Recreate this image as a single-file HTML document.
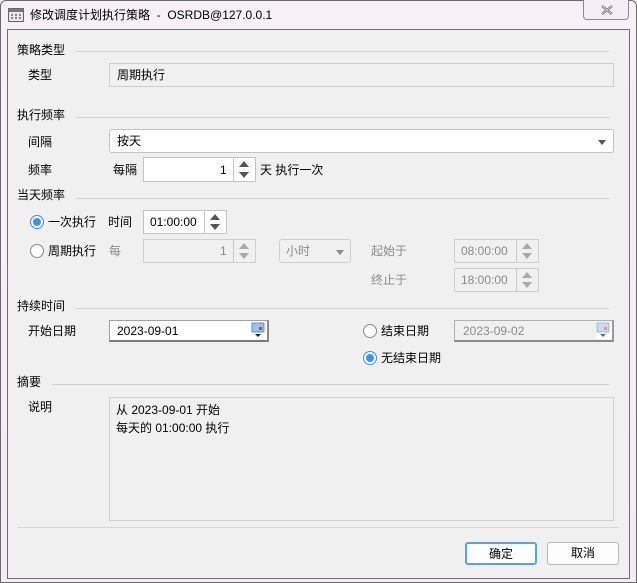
<!DOCTYPE html>
<html><head><meta charset="utf-8"><style>
*{box-sizing:border-box;margin:0;padding:0}
body{width:637px;height:583px;position:relative;overflow:hidden;background:#f5eef5;font-family:"Liberation Sans","Noto Sans CJK SC",sans-serif;font-size:12px;color:#000}
.a{position:absolute;white-space:nowrap;line-height:14px}
.frame{position:absolute;left:0;top:0;width:637px;height:583px;border:1px solid #6a6a6a;border-radius:6px 6px 0 0;background:linear-gradient(#f7f1f7,#f4ecf4)}
.inner{position:absolute;left:7px;top:29px;width:623px;height:550px;background:#f0f0f0;border:1px solid #6e6e6e}
.ln{position:absolute;height:1px;background:#d3d3d3}
.box{position:absolute;border:1px solid #c3c3c3;background:#fff}
.dis{background:#f0f0f0;border-color:#cfcfcf;color:#8a8a8a}
.g{color:#8a8a8a}
.spb{position:absolute;top:0;bottom:0;right:0;width:22px;border-left:1px solid #c8c8c8}
.spb:before{content:"";position:absolute;left:5px;top:3px;border:5px solid transparent;border-bottom:6px solid #555;border-top:0}
.spb:after{content:"";position:absolute;left:5px;bottom:3px;border:5px solid transparent;border-top:6px solid #555;border-bottom:0}
.spb.d:before{border-bottom-color:#aaa}.spb.d:after{border-top-color:#aaa}
.rad{position:absolute;width:14px;height:14px;border-radius:50%;border:1px solid #8a8a8a;background:#fff}
.rad.on{border-color:#3c8ee0}
.rad.on:after{content:"";position:absolute;left:2px;top:2px;width:8px;height:8px;border-radius:50%;background:#3c94e8}
.tri{position:absolute;border:4px solid transparent;border-top:5px solid #555;border-bottom:0}
.btn{position:absolute;border:1px solid #b9b9b9;border-radius:3px;background:#fdfdfd;text-align:center;line-height:20px}
</style></head><body>
<div class="frame"></div>
<svg class="a" style="left:8px;top:8px" width="16" height="14"><rect x="0.5" y="0.5" width="15" height="13" fill="#e8e8e8" stroke="#666"/><rect x="1" y="1" width="14" height="3" fill="#777"/><g fill="#888"><rect x="3" y="6" width="2" height="2"/><rect x="7" y="6" width="2" height="2"/><rect x="11" y="6" width="2" height="2"/><rect x="3" y="9" width="2" height="2"/><rect x="7" y="9" width="2" height="2"/><rect x="11" y="9" width="2" height="2"/></g></svg>
<div class="a" style="left:30px;top:8px;font-size:12px">修改调度计划执行策略 &nbsp;- &nbsp;OSRDB@127.0.0.1</div>
<div class="a" style="left:583px;top:0;width:46px;height:20px;border:1px solid #8a8a8a;border-top:0;border-radius:0 0 4px 4px;background:#f6eef6"><svg style="position:absolute;left:17px;top:5px" width="12" height="10"><path d="M1 1L11 9M11 1L1 9" stroke="#666" stroke-width="2.4"/><path d="M1 1L11 9M11 1L1 9" stroke="#f6f6f6" stroke-width="0.8"/></svg></div>
<div class="inner"></div>

<div class="a" style="left:17px;top:43px">策略类型</div><div class="ln" style="left:76px;top:51px;width:533px"></div>
<div class="a" style="left:28px;top:68px">类型</div>
<div class="box dis" style="left:109px;top:63px;width:505px;height:24px;color:#000"><div class="a" style="left:7px;top:4px">周期执行</div></div>

<div class="a" style="left:17px;top:108px">执行频率</div><div class="ln" style="left:76px;top:117px;width:533px"></div>
<div class="a" style="left:28px;top:135px">间隔</div>
<div class="box" style="left:109px;top:129px;width:505px;height:24px;border-radius:3px"><div class="a" style="left:7px;top:4px">按天</div><div class="tri" style="left:488px;top:10px"></div></div>
<div class="a" style="left:28px;top:163px">频率</div><div class="a" style="left:113px;top:163px">每隔</div>
<div class="box" style="left:143px;top:157px;width:113px;height:25px"><div class="a" style="left:76px;top:5px">1</div><div class="spb"></div></div>
<div class="a" style="left:260px;top:163px">天 执行一次</div>

<div class="a" style="left:17px;top:188px">当天频率</div><div class="ln" style="left:76px;top:198px;width:533px"></div>
<div class="rad on" style="left:30px;top:215px"></div><div class="a" style="left:48px;top:215px">一次执行</div>
<div class="a" style="left:108px;top:215px">时间</div>
<div class="box" style="left:143px;top:210px;width:84px;height:24px"><div class="a" style="left:6px;top:4px">01:00:00</div><div class="spb"></div></div>
<div class="rad" style="left:30px;top:244px"></div><div class="a" style="left:48px;top:244px">周期执行</div>
<div class="a g" style="left:109px;top:244px">每</div>
<div class="box dis" style="left:143px;top:239px;width:113px;height:24px"><div class="a" style="left:76px;top:4px">1</div><div class="spb d"></div></div>
<div class="box dis" style="left:279px;top:239px;width:72px;height:24px;border-radius:3px"><div class="a" style="left:6px;top:4px">小时</div><div class="tri" style="left:56px;top:10px;border-top-color:#888"></div></div>
<div class="a g" style="left:371px;top:244px">起始于</div>
<div class="box dis" style="left:454px;top:239px;width:85px;height:24px"><div class="a" style="left:6px;top:4px">08:00:00</div><div class="spb d"></div></div>
<div class="a g" style="left:371px;top:273px">终止于</div>
<div class="box dis" style="left:454px;top:268px;width:85px;height:24px"><div class="a" style="left:6px;top:4px">18:00:00</div><div class="spb d"></div></div>

<div class="a" style="left:17px;top:299px">持续时间</div><div class="ln" style="left:76px;top:308px;width:533px"></div>
<div class="a" style="left:28px;top:324px">开始日期</div>
<div class="box" style="left:109px;top:320px;width:160px;height:22px;border-color:#a0a0a0;border-bottom:2px solid #7a7a7a;border-right:2px solid #8a8a8a"><div class="a" style="left:7px;top:3px">2023-09-01</div>
<svg style="position:absolute;left:141px;top:1px" width="16" height="17"><rect x="1" y="1" width="12" height="9" fill="#9ec0ec" stroke="#4a7ac0" stroke-width="0.8"/><rect x="8" y="5" width="3" height="3" fill="#e33"/><path d="M4 12h6l-3 3z" fill="#222"/></svg></div>
<div class="rad" style="left:363px;top:324px"></div><div class="a" style="left:381px;top:324px">结束日期</div>
<div class="box dis" style="left:454px;top:320px;width:160px;height:22px;border-color:#b0b0b0;border-bottom:2px solid #8a8a8a;border-right:2px solid #999"><div class="a" style="left:8px;top:3px">2023-09-02</div>
<svg style="position:absolute;left:141px;top:1px" width="16" height="17"><rect x="0" y="0" width="17" height="19" fill="#fff"/><rect x="1" y="1" width="12" height="9" fill="#c8dcf4" stroke="#8aaad8" stroke-width="0.8"/><rect x="8" y="5" width="3" height="3" fill="#f88"/><path d="M4 12h6l-3 3z" fill="#666"/></svg></div>
<div class="rad on" style="left:363px;top:351px"></div><div class="a" style="left:381px;top:351px">无结束日期</div>

<div class="a" style="left:17px;top:375px">摘要</div><div class="ln" style="left:52px;top:384px;width:557px"></div>
<div class="a" style="left:28px;top:400px">说明</div>
<div class="box" style="left:109px;top:397px;width:505px;height:124px;background:#f0f0f0;border-color:#d0d0d0">
<div class="a" style="left:6px;top:5px">从 2023-09-01 开始</div>
<div class="a" style="left:6px;top:23px">每天的 01:00:00 执行</div></div>
<div class="ln" style="left:17px;top:527px;width:602px;background:#d8d8d8"></div>
<div class="btn" style="left:465px;top:542px;width:72px;height:23px;border:2px solid #5aa0e8">确定</div>
<div class="btn" style="left:547px;top:542px;width:72px;height:23px">取消</div>
</body></html>
